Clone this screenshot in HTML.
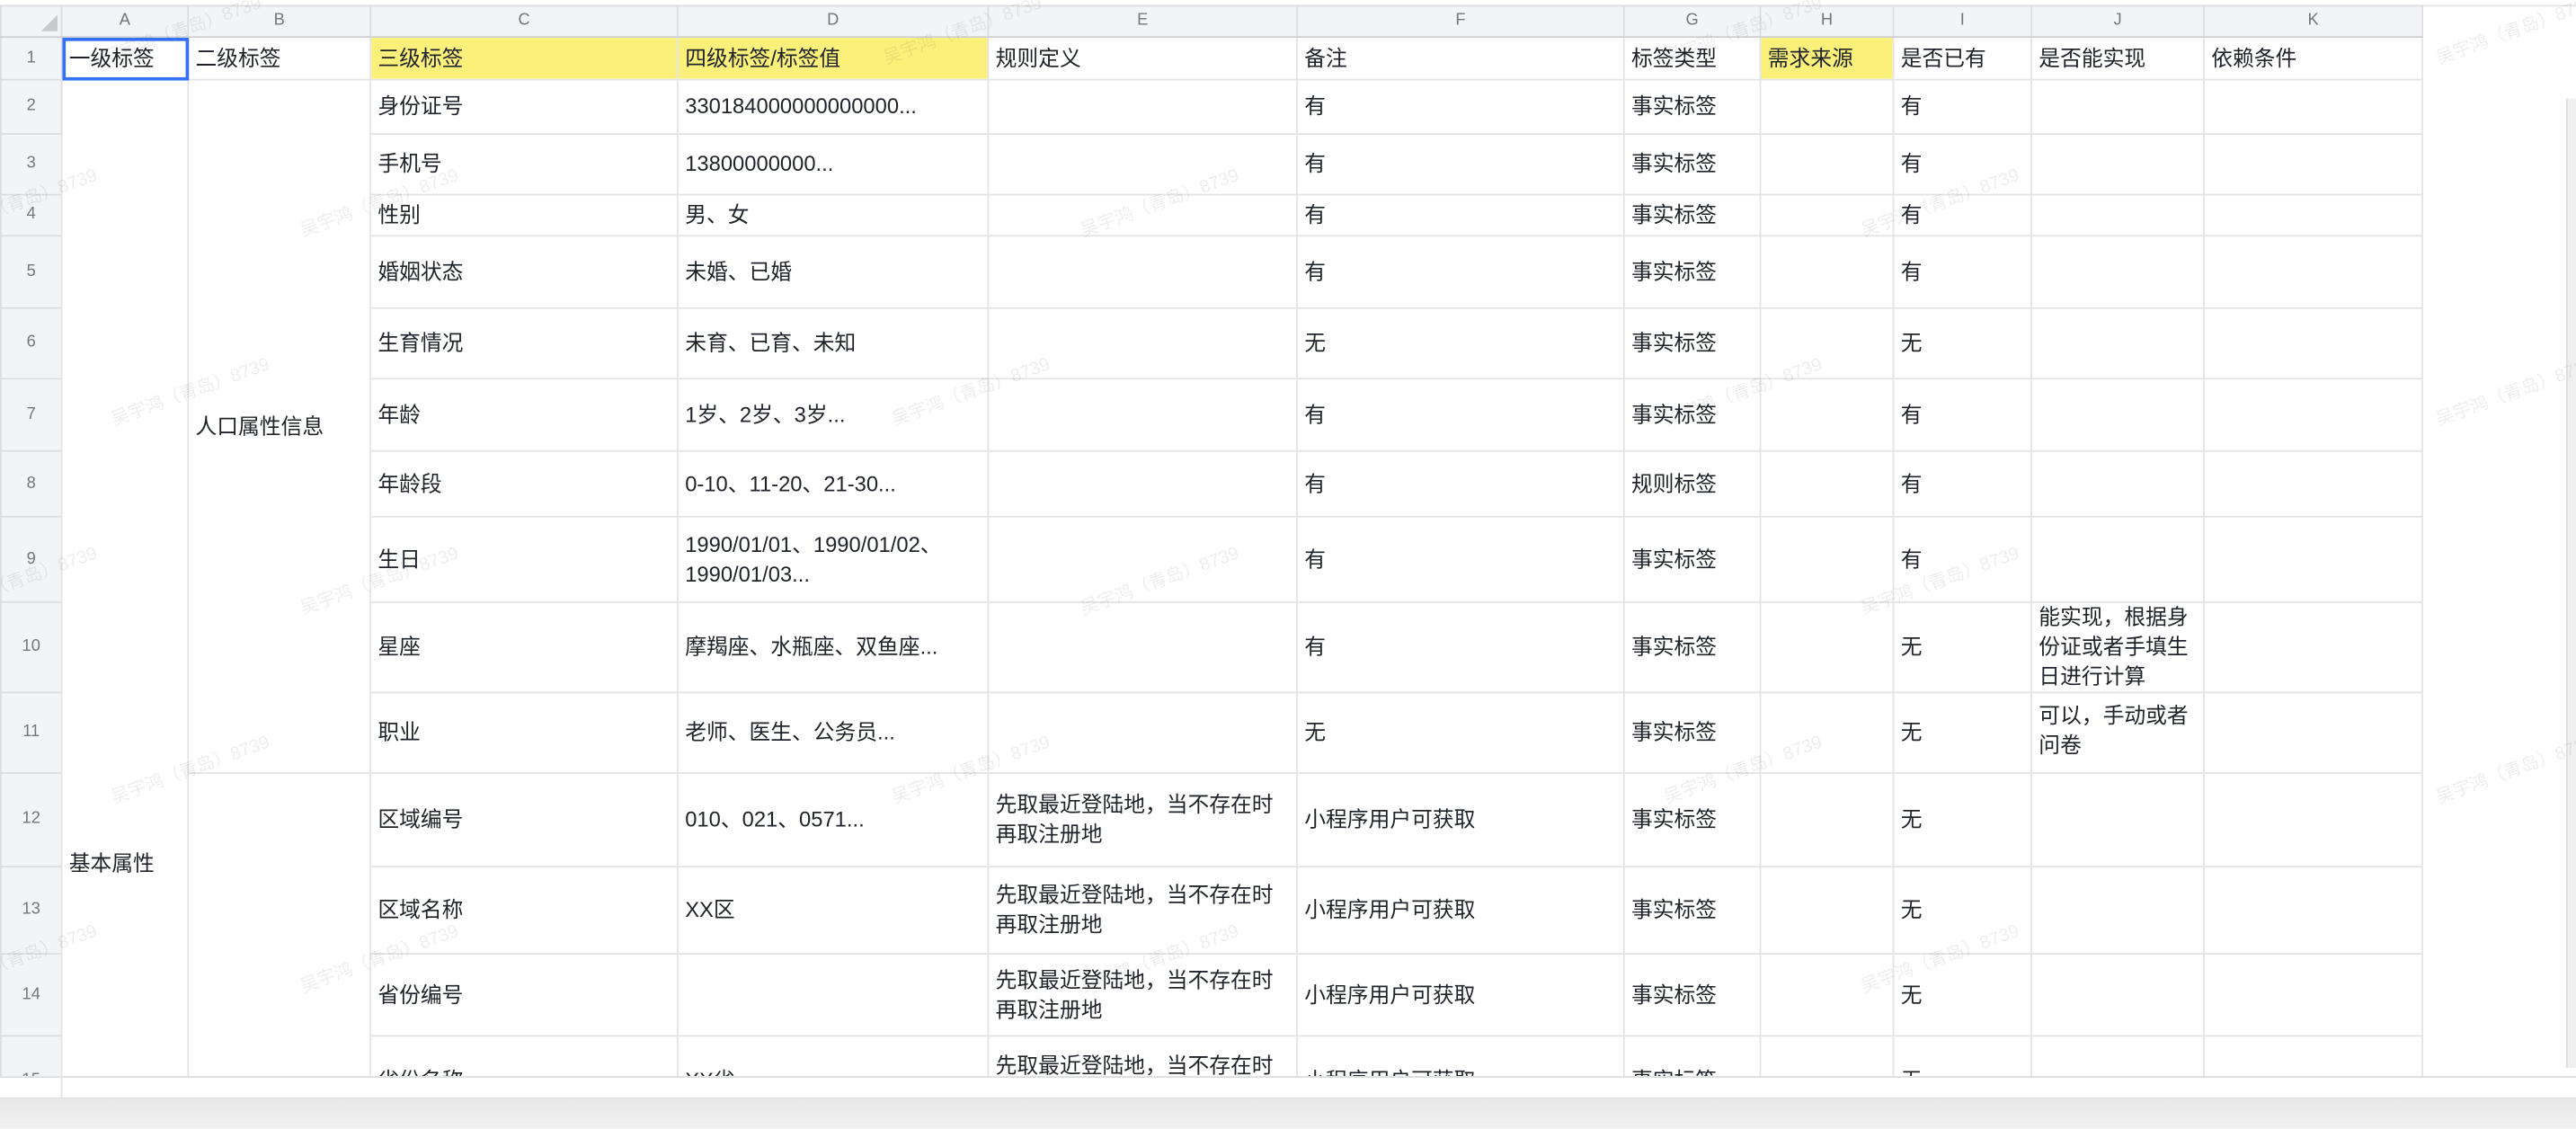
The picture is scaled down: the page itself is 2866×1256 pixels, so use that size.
<!DOCTYPE html>
<html><head><meta charset="utf-8">
<style>
html,body{margin:0;padding:0;background:#fff;width:2866px;height:1256px;overflow:hidden;position:relative}
#s{transform:scale(1.82781);transform-origin:0 0;width:1568px;height:687px;position:absolute;left:0;top:0;overflow:hidden;background:#fff;font-family:"Liberation Sans","Noto Sans CJK SC",sans-serif;color:#1f2329}
#clip{position:absolute;left:0;top:3px;width:1568px;height:652px;overflow:hidden}
table{border-collapse:collapse;table-layout:fixed;position:absolute;left:0;top:0}
td{border:1px solid #e3e4e6;padding:0 0 0 4px;font-size:13px;line-height:18px;vertical-align:middle;overflow:hidden;white-space:normal;word-break:normal;line-break:anywhere}
td.e{padding-right:10px}
tr.h td{background:#f3f4f5;color:#73777c;font-size:10px;text-align:center;padding:0;border-color:#dcdde0;border-bottom:1.5px solid #cfd0d3}
td.rh{background:#f3f4f5;color:#73777c;font-size:10px;text-align:center;padding:0;border-color:#dcdde0}
td.y{background:#fbf07a}
td.sel{outline:2px solid #3370ff;outline-offset:-2px}
.wm{position:absolute;font-size:11px;color:rgba(0,0,0,0.07);transform:rotate(-20deg);white-space:nowrap;pointer-events:none}
</style></head><body>
<div id="s">
<div style="position:absolute;left:0;top:0;width:1568px;height:3px;border-bottom:1px solid #e3e4e6"></div>
<div id="clip">
<table>
<colgroup><col style="width:37px"><col style="width:77px"><col style="width:111px"><col style="width:187px"><col style="width:189px"><col style="width:188px"><col style="width:199px"><col style="width:83px"><col style="width:81px"><col style="width:84px"><col style="width:105px"><col style="width:133px"></colgroup>
<tr class="h" style="height:17px"><td style="position:relative"><div style="position:absolute;right:2px;bottom:3px;width:0;height:0;border-left:10px solid transparent;border-bottom:10px solid #c8c9cc"></div></td><td>A</td><td>B</td><td>C</td><td>D</td><td>E</td><td>F</td><td>G</td><td>H</td><td>I</td><td>J</td><td>K</td></tr>
<tr style="height:26px"><td class="rh">1</td><td class="sel">一级标签</td><td>二级标签</td><td class="y">三级标签</td><td class="y">四级标签/标签值</td><td>规则定义</td><td>备注</td><td>标签类型</td><td class="y">需求来源</td><td>是否已有</td><td>是否能实现</td><td>依赖条件</td></tr>
<tr style="height:33px"><td class="rh">2</td><td rowspan="15" style="vertical-align:top;padding-top:468px">基本属性</td><td rowspan="10">人口属性信息</td><td>身份证号</td><td>330184000000000000...</td><td></td><td>有</td><td>事实标签</td><td></td><td>有</td><td></td><td></td></tr>
<tr style="height:37px"><td class="rh">3</td><td>手机号</td><td>13800000000...</td><td></td><td>有</td><td>事实标签</td><td></td><td>有</td><td></td><td></td></tr>
<tr style="height:25px"><td class="rh">4</td><td>性别</td><td>男、女</td><td></td><td>有</td><td>事实标签</td><td></td><td>有</td><td></td><td></td></tr>
<tr style="height:44px"><td class="rh">5</td><td>婚姻状态</td><td>未婚、已婚</td><td></td><td>有</td><td>事实标签</td><td></td><td>有</td><td></td><td></td></tr>
<tr style="height:43px"><td class="rh">6</td><td>生育情况</td><td>未育、已育、未知</td><td></td><td>无</td><td>事实标签</td><td></td><td>无</td><td></td><td></td></tr>
<tr style="height:44px"><td class="rh">7</td><td>年龄</td><td>1岁、2岁、3岁...</td><td></td><td>有</td><td>事实标签</td><td></td><td>有</td><td></td><td></td></tr>
<tr style="height:40px"><td class="rh">8</td><td>年龄段</td><td>0-10、11-20、21-30...</td><td></td><td>有</td><td>规则标签</td><td></td><td>有</td><td></td><td></td></tr>
<tr style="height:52px"><td class="rh">9</td><td>生日</td><td>1990/01/01、1990/01/02、<br>1990/01/03...</td><td></td><td>有</td><td>事实标签</td><td></td><td>有</td><td></td><td></td></tr>
<tr style="height:52px"><td class="rh">10</td><td>星座</td><td>摩羯座、水瓶座、双鱼座...</td><td></td><td>有</td><td>事实标签</td><td></td><td>无</td><td style="vertical-align:top;padding-top:0">能实现，根据身份证或者手填生日进行计算</td><td></td></tr>
<tr style="height:49px"><td class="rh">11</td><td>职业</td><td>老师、医生、公务员...</td><td></td><td>无</td><td>事实标签</td><td></td><td>无</td><td style="vertical-align:top;padding-top:5px">可以，手动或者问卷</td><td></td></tr>
<tr style="height:57px"><td class="rh">12</td><td rowspan="5"></td><td>区域编号</td><td>010、021、0571...</td><td class="e">先取最近登陆地，当不存在时<br>再取注册地</td><td>小程序用户可获取</td><td>事实标签</td><td></td><td>无</td><td></td><td></td></tr>
<tr style="height:53px"><td class="rh">13</td><td>区域名称</td><td>XX区</td><td class="e">先取最近登陆地，当不存在时<br>再取注册地</td><td>小程序用户可获取</td><td>事实标签</td><td></td><td>无</td><td></td><td></td></tr>
<tr style="height:50px"><td class="rh">14</td><td>省份编号</td><td></td><td class="e">先取最近登陆地，当不存在时<br>再取注册地</td><td>小程序用户可获取</td><td>事实标签</td><td></td><td>无</td><td></td><td></td></tr>
<tr style="height:54px"><td class="rh">15</td><td>省份名称</td><td>XX省</td><td class="e">先取最近登陆地，当不存在时<br>再取注册地</td><td>小程序用户可获取</td><td>事实标签</td><td></td><td>无</td><td></td><td></td></tr>
<tr style="height:50px"><td class="rh">16</td><td></td><td></td><td></td><td></td><td></td><td></td><td></td><td></td><td></td></tr>
</table>
</div>
<div style="position:absolute;left:1562px;top:60px;width:6px;height:590px;background:#f0f0f0;border-left:1px solid #e0e0e0"></div>
<div style="position:absolute;left:0;top:655px;width:1568px;height:13px;background:#fff;border-top:1.5px solid #dcdde0"></div>
<div style="position:absolute;left:37px;top:655px;width:1px;height:13px;background:#e3e4e6"></div>
<div style="position:absolute;left:0;top:668px;width:1568px;height:19px;background:linear-gradient(#e9e9ea,#f1f1f2);border-top:1px solid #dedfe0"></div>
<div class="wm" style="left:60px;top:10px">吴宇鸿（青岛）8739</div>
<div class="wm" style="left:535px;top:10px">吴宇鸿（青岛）8739</div>
<div class="wm" style="left:1010px;top:10px">吴宇鸿（青岛）8739</div>
<div class="wm" style="left:1480px;top:10px">吴宇鸿（青岛）8739</div>
<div class="wm" style="left:180px;top:115px">吴宇鸿（青岛）8739</div>
<div class="wm" style="left:655px;top:115px">吴宇鸿（青岛）8739</div>
<div class="wm" style="left:1130px;top:115px">吴宇鸿（青岛）8739</div>
<div class="wm" style="left:-40px;top:115px">吴宇鸿（青岛）8739</div>
<div class="wm" style="left:65px;top:230px">吴宇鸿（青岛）8739</div>
<div class="wm" style="left:540px;top:230px">吴宇鸿（青岛）8739</div>
<div class="wm" style="left:1010px;top:230px">吴宇鸿（青岛）8739</div>
<div class="wm" style="left:1480px;top:230px">吴宇鸿（青岛）8739</div>
<div class="wm" style="left:180px;top:345px">吴宇鸿（青岛）8739</div>
<div class="wm" style="left:655px;top:345px">吴宇鸿（青岛）8739</div>
<div class="wm" style="left:1130px;top:345px">吴宇鸿（青岛）8739</div>
<div class="wm" style="left:-40px;top:345px">吴宇鸿（青岛）8739</div>
<div class="wm" style="left:65px;top:460px">吴宇鸿（青岛）8739</div>
<div class="wm" style="left:540px;top:460px">吴宇鸿（青岛）8739</div>
<div class="wm" style="left:1010px;top:460px">吴宇鸿（青岛）8739</div>
<div class="wm" style="left:1480px;top:460px">吴宇鸿（青岛）8739</div>
<div class="wm" style="left:180px;top:575px">吴宇鸿（青岛）8739</div>
<div class="wm" style="left:655px;top:575px">吴宇鸿（青岛）8739</div>
<div class="wm" style="left:1130px;top:575px">吴宇鸿（青岛）8739</div>
<div class="wm" style="left:-40px;top:575px">吴宇鸿（青岛）8739</div>
</div>
</body></html>
